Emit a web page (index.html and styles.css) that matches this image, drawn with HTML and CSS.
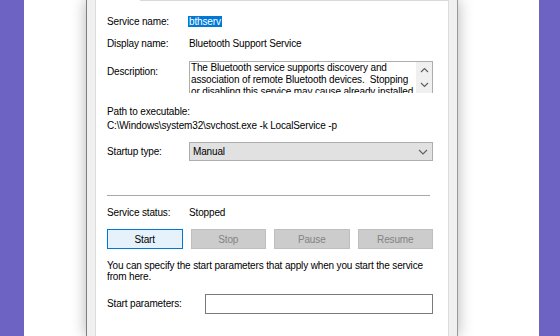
FILE: index.html
```html
<!DOCTYPE html>
<html>
<head>
    <title>Bluetooth Support Service Properties</title>
    <link rel="stylesheet" href="styles.css">
</head>
<body>
    <div class="screen">
        <div class="dialog">
            <div class="page">
                <div class="tab-edge"><span class="tab-open"></span><span class="tab-line"></span></div>

                <div class="row row-name">
                    <span class="label">Service name:</span>
                    <span class="value"><span class="selected">bthserv</span></span>
                </div>
                <div class="row row-display">
                    <span class="label">Display name:</span>
                    <span class="value">Bluetooth Support Service</span>
                </div>
                <div class="row row-desc">
                    <span class="label">Description:</span>
                    <div class="textbox">
                        <div class="textbox-text">The Bluetooth service supports discovery and association of remote Bluetooth devices.&nbsp; Stopping or disabling this service may cause already installed Bluetooth devices to fail to operate properly.</div>
                        <div class="scrollbar">
                            <svg width="9" height="6" viewBox="0 0 9 6"><path d="M1 5 L4.5 1.5 L8 5" fill="none" stroke="#606060" stroke-width="1.2"/></svg>
                            <svg width="9" height="6" viewBox="0 0 9 6"><path d="M1 1 L4.5 4.5 L8 1" fill="none" stroke="#606060" stroke-width="1.2"/></svg>
                        </div>
                    </div>
                </div>

                <div class="path-label">Path to executable:</div>
                <div class="path-value">C:\Windows\system32\svchost.exe -k LocalService -p</div>

                <div class="row row-startup">
                    <span class="label">Startup type:</span>
                    <div class="combo">
                        <span>Manual</span>
                        <svg width="10" height="6" viewBox="0 0 10 6"><path d="M1 1 L5 5 L9 1" fill="none" stroke="#606060" stroke-width="1.1"/></svg>
                    </div>
                </div>

                <div class="separator"></div>

                <div class="row row-status">
                    <span class="label">Service status:</span>
                    <span class="value">Stopped</span>
                </div>

                <div class="buttons">
                    <button class="btn btn-default">Start</button>
                    <button class="btn" disabled>Stop</button>
                    <button class="btn" disabled>Pause</button>
                    <button class="btn" disabled>Resume</button>
                </div>

                <p class="hint">You can specify the start parameters that apply when you start the service from here.</p>

                <div class="row row-params">
                    <span class="label">Start parameters:</span>
                    <input type="text" class="param-input">
                </div>
            </div>
        </div>
    </div>
</body>
</html>
```

FILE: styles.css
```css
body {
    margin: 0;
    background-color: #6c63c3;
    font-family: "Liberation Sans", Arial, sans-serif;
    font-size: 10px;
    letter-spacing: -0.15px;
    color: #000;
    overflow: hidden;
}

.screen {
    margin: 0 21px 0 24px;
    height: 336px;
    background-color: #fff;
    overflow: hidden;
}

.dialog {
    margin-left: 62px;
    width: 354px;
    height: 336px;
    padding: 0 8px;
    background-color: #f0f0f0;
    border-left: 1px solid #7f7f7f;
    border-right: 1px solid #999;
    box-shadow: 0 0 14px rgba(0, 0, 0, 0.3);
}

.page {
    height: 336px;
    padding: 0 15px 0 11px;
    background-color: #fff;
    border-left: 1px solid #dcdcdc;
    border-right: 1px solid #dcdcdc;
}

.tab-edge {
    display: flex;
    height: 1px;
    margin: 0 -16px 0 -12px;
}

.tab-open {
    width: 45px;
}

.tab-line {
    flex: 1;
    background-color: #d9d9d9;
}

.row {
    display: flex;
    align-items: center;
    line-height: 12px;
}

.label {
    width: 82px;
    flex-shrink: 0;
}

.row-name {
    margin-top: 15px;
    height: 12px;
}

.selected {
    background-color: #0078d7;
    color: #fff;
    padding: 0 1px 0 1px;
    margin-left: -1px;
    display: inline-block;
    line-height: 11px;
}

.row-display {
    margin-top: 10px;
    height: 12px;
}

.row-desc {
    margin-top: 11px;
    align-items: flex-start;
}

.row-desc .label {
    padding-top: 5px;
}

.textbox {
    display: flex;
    width: 243px;
    height: 31px;
    border: 1px solid #adadad;
    border-bottom: none;
    overflow: hidden;
}

.textbox-text {
    flex: 1;
    padding-left: 1px;
    line-height: 12px;
}

.scrollbar {
    width: 16px;
    background-color: #f0f0f0;
    display: flex;
    flex-direction: column;
    align-items: center;
    gap: 9px;
    padding-top: 5px;
}

.scrollbar svg {
    display: block;
}

.path-label {
    margin-top: 13px;
    line-height: 12px;
}

.path-value {
    margin-top: 2px;
    line-height: 12px;
}

.row-startup {
    margin-top: 10px;
}

.combo {
    display: flex;
    align-items: center;
    justify-content: space-between;
    width: 240px;
    height: 17px;
    padding: 0 4px 0 3px;
    background-color: #e1e1e1;
    border: 1px solid #adadad;
}

.separator {
    margin-top: 34px;
    width: 323px;
    border-top: 1px solid #a8a8a8;
}

.row-status {
    margin-top: 11px;
    height: 12px;
}

.buttons {
    display: grid;
    grid-template-columns: repeat(4, 1fr);
    gap: 8px;
    margin-top: 10px;
}

.btn {
    height: 20px;
    font-family: "Liberation Sans", Arial, sans-serif;
    font-size: 10px;
    letter-spacing: -0.15px;
    border: 1px solid #bfbfbf;
    background-color: #cccccc;
    color: #838383;
    padding: 0;
}

.btn-default {
    background-color: #e5f1fb;
    border-color: #0078d7;
    color: #000;
}

.hint {
    margin: 11px 0 0 0;
    line-height: 11px;
}

.row-params {
    margin-top: 12px;
}

.row-params .label {
    width: 98px;
}

.param-input {
    width: 228px;
    height: 20px;
    box-sizing: border-box;
    margin: 0;
    border: 1px solid #7a7a7a;
    outline: none;
}
```
